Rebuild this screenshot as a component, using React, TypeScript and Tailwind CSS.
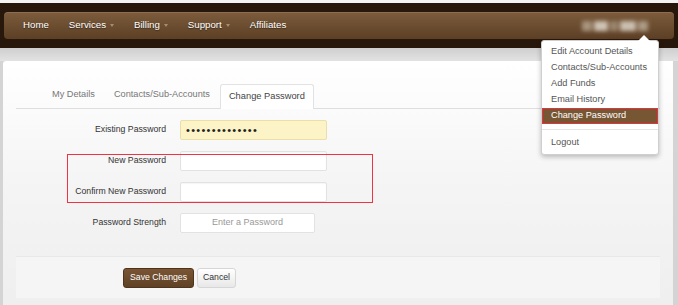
import React from 'react';

const navItems = [
  { label: 'Home', caret: false },
  { label: 'Services', caret: true },
  { label: 'Billing', caret: true },
  { label: 'Support', caret: true },
  { label: 'Affiliates', caret: false },
];

const menuItems = ['Edit Account Details', 'Contacts/Sub-Accounts', 'Add Funds', 'Email History'];

function Caret() {
  return <span className="ml-[4px] mt-[1px] h-0 w-0 border-x-[2.5px] border-t-[3px] border-x-transparent border-t-[#a58d72]" />;
}

function FormRow({ label, children }: { label: string; children: React.ReactNode }) {
  return (
    <div className="flex h-[20px] items-center">
      <label className="w-[151px] pr-[1px] text-right text-[8.7px] text-[#333]">{label}</label>
      <div className="ml-[13px]">{children}</div>
    </div>
  );
}

export default function App() {
  return (
    <div className="relative h-[305px] w-[678px] overflow-hidden bg-[#d4d4d4] font-['Liberation_Sans',Arial,sans-serif]">
      <div className="h-[3px] bg-[#f4f4f4]" />
      <header className="h-[45px] bg-[#28180b] px-[4px] pt-[9px]">
        <nav className="flex h-[27px] items-center rounded-[4px] bg-gradient-to-b from-[#7c5c3c] to-[#5c3f25] pl-[19px] pr-[12px] shadow-[inset_0_1px_0_rgba(255,255,255,0.12)]">
          <ul className="flex items-center gap-[20px]">
            {navItems.map((n) => (
              <li key={n.label} className="flex items-center text-[9.7px] text-white [text-shadow:0_1px_1px_rgba(0,0,0,0.45)]">
                {n.label}
                {n.caret && <Caret />}
              </li>
            ))}
          </ul>
          <div className="ml-auto mr-[14px] flex h-[11px] items-center gap-[2px] blur-[2px]">
            <span className="h-[10px] w-[10px] bg-[#a8957f]" />
            <span className="h-[10px] w-[14px] bg-[#cfc3b4]" />
            <span className="h-[10px] w-[8px] bg-[#9c8770]" />
            <span className="h-[10px] w-[16px] bg-[#cbbfb0]" />
            <span className="h-[10px] w-[10px] bg-[#ad9b86]" />
          </div>
        </nav>
      </header>
      <div className="h-[13px] bg-gradient-to-b from-[#cfcfcf] to-[#e2e2e2]" />

      <main className="ml-[3px] mr-[5px] h-[260px] rounded-tl-[3px] bg-gradient-to-b from-white via-[#f4f4f4] to-[#eeeeee] px-[13px] pt-[24px]">
        <ul className="flex h-[24px] items-end border-b border-[#dedede] pl-[26px]">
          <li className="px-[10px] pb-[6px] text-[9.2px] text-[#777]">My Details</li>
          <li className="pl-[9px] pr-[10px] pb-[6px] text-[9.2px] text-[#777]">Contacts/Sub-Accounts</li>
          <li className="-mb-px flex h-[25px] items-center rounded-t-[3px] border border-b-0 border-[#e2e2e2] bg-white px-[8px] pb-[1px] text-[9.3px] text-[#444]">
            Change Password
          </li>
        </ul>

        <div className="mt-[11px] flex flex-col gap-[11px]">
          <FormRow label="Existing Password">
            <div className="flex h-[20px] w-[147px] items-center rounded-[2px] border border-[#eadfa8] bg-[#fcf4c6] pl-[5px] text-[11px] leading-none tracking-[1.3px] text-[#222]">
              ••••••••••••••
            </div>
          </FormRow>
          <FormRow label="New Password">
            <div className="h-[20px] w-[147px] rounded-[2px] border border-[#e2e2e2] bg-white shadow-[inset_0_1px_1px_rgba(0,0,0,0.04)]" />
          </FormRow>
          <FormRow label="Confirm New Password">
            <div className="h-[20px] w-[147px] rounded-[2px] border border-[#e2e2e2] bg-white shadow-[inset_0_1px_1px_rgba(0,0,0,0.04)]" />
          </FormRow>
          <FormRow label="Password Strength">
            <div className="flex h-[20px] w-[135px] items-center justify-center rounded-[2px] border border-[#e2e2e2] bg-white text-[9px] text-[#999]">
              Enter a Password
            </div>
          </FormRow>
        </div>

        <div className="mt-[23px] flex h-[42px] items-center border-t border-[#e8e8e8] bg-[#f5f5f5] pl-[107px]">
          <button className="h-[20px] rounded-[3px] border border-[#4e341c] bg-gradient-to-b from-[#7a5534] to-[#5f4125] px-[6px] text-[8.7px] text-white">
            Save Changes
          </button>
          <button className="ml-[3px] h-[20px] rounded-[3px] border border-[#d6d6d6] bg-gradient-to-b from-white to-[#e8e8e8] px-[5px] text-[8.7px] text-[#333]">
            Cancel
          </button>
        </div>
      </main>

      <div className="absolute left-[67px] top-[154px] h-[49px] w-[306px] border border-[#ee3342]" />

      <div className="absolute left-[541px] top-[40px] w-[118px] rounded-[3px] border border-[#cfcfcf] bg-white py-[3px] shadow-[0_2px_5px_rgba(0,0,0,0.25)]">
        <span className="absolute -top-[6px] right-[8px] h-0 w-0 border-x-[6px] border-b-[6px] border-x-transparent border-b-white" />
        {menuItems.map((m) => (
          <div key={m} className="flex h-[16px] items-center whitespace-nowrap px-[9px] text-[9.2px] text-[#555]">
            {m}
          </div>
        ))}
        <div className="flex h-[16px] items-center whitespace-nowrap border-[1.5px] border-[#e5323f] bg-[#775634] px-[8px] text-[9.2px] text-white">
          Change Password
        </div>
        <div className="my-[5px] h-px bg-[#e5e5e5]" />
        <div className="flex h-[16px] items-center whitespace-nowrap px-[9px] text-[9.2px] text-[#555]">Logout</div>
      </div>
    </div>
  );
}
